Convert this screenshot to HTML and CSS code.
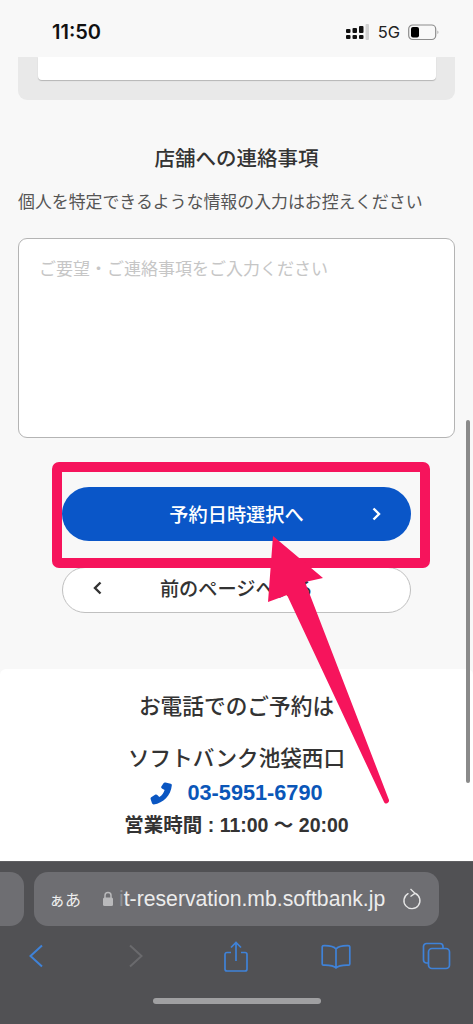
FILE: index.html
```html
<!DOCTYPE html>
<html lang="ja">
<head>
    <meta charset="UTF-8">
    <meta name="viewport" content="width=device-width, initial-scale=1.0">
    <title>予約</title>
    <link rel="stylesheet" href="styles.css">
</head>
<body>
    <div class="status-bar">
        <span class="clock">11:50</span>
        <div class="status-icons">
            <svg width="24" height="17" viewBox="0 0 24 17">
                <g fill="#111">
                    <rect x="0" y="5" width="4.500" height="4" rx="1"/>
                    <rect x="0" y="11" width="4.500" height="4" rx="1"/>
                    <rect x="6.500" y="4" width="4.500" height="5" rx="1"/>
                    <rect x="6.500" y="11" width="4.500" height="4" rx="1"/>
                    <rect x="13" y="2" width="4.500" height="7" rx="1"/>
                    <rect x="13" y="11" width="4.500" height="4" rx="1"/>
                </g>
                <rect x="19.500" y="0" width="3.500" height="16" rx="1" fill="#d2d2d2"/>
            </svg>
            <span class="network">5G</span>
            <svg width="32" height="17" viewBox="0 0 32 17">
                <rect x="0.700" y="1" width="27" height="14.500" rx="4" fill="none" stroke="#8c8c8c" stroke-width="1.200"/>
                <rect x="3" y="3" width="8" height="10.500" rx="2" fill="#000"/>
                <path d="M29.500 6.500c1.200.4 1.200 3 0 3.500z" fill="#999"/>
            </svg>
        </div>
    </div>

    <main class="content">
        <div class="prev-panel">
            <div class="prev-card"></div>
        </div>

        <h2 class="section-title">店舗への連絡事項</h2>
        <p class="section-note">個人を特定できるような情報の入力はお控えください</p>
        <div class="message-box">ご要望・ご連絡事項をご入力ください</div>

        <div class="buttons">
            <div class="btn btn-next">
                <span></span>
                <span>予約日時選択へ</span>
                <svg class="chevron chevron-next" width="12" height="16" viewBox="0 0 12 16">
                    <path d="M2.500 2.500L8 8l-5.500 5.500" fill="none" stroke="#fff" stroke-width="2.400"/>
                </svg>
            </div>
            <div class="btn btn-back">
                <svg class="chevron chevron-back" width="12" height="16" viewBox="0 0 12 16">
                    <path d="M9.500 2.500L4 8l5.500 5.500" fill="none" stroke="#333" stroke-width="2.400"/>
                </svg>
                <span>前のページへ戻る</span>
                <span></span>
            </div>
        </div>
    </main>

    <section class="phone-info">
        <h3 class="phone-title">お電話でのご予約は</h3>
        <div class="shop-name">ソフトバンク池袋西口</div>
        <div class="phone-row">
            <svg width="23" height="24" viewBox="0 0 23 24">
                <path d="M15.500 1.500l5.200 1.300c.8.2 1.200.8 1.100 1.600-.9 9.800-8.500 17.700-18 19-.8.1-1.500-.3-1.800-1.100L.6 17.900c-.2-.7 0-1.300.6-1.700l4.300-2.600c.6-.4 1.300-.2 1.800.3l2 2.200c2.700-1.700 4.500-4.300 5.300-7.200l-2.700-1.500c-.6-.3-.8-1-.7-1.600l2.300-3.500c.4-.6 1-.9 1.700-.8z" fill="#0a56c2"/>
            </svg>
            <span class="phone-number">03-5951-6790</span>
        </div>
        <div class="hours">営業時間 : 11:00 〜 20:00</div>
    </section>

    <div class="toolbar">
        <div class="url-row">
            <div class="prev-tab"></div>
            <div class="url-bar">
                <span class="text-size">ぁあ</span>
                <svg width="12" height="16" viewBox="0 0 12 16">
                    <path d="M3 7V4.500a3 3 0 0 1 6 0V7" fill="none" stroke="#b9b9bb" stroke-width="1.500"/>
                    <rect x="1" y="6.500" width="10" height="8.500" rx="1.500" fill="#b9b9bb"/>
                </svg>
                <span class="url-text"><span class="url-fade">i</span>t-reservation.mb.softbank.jp</span>
                <svg width="20" height="23" viewBox="0 0 20 23">
                    <path d="M13.500 5.500a8 8 0 1 1-7.500.2" fill="none" stroke="#e6e6e6" stroke-width="1.400" stroke-linecap="round"/>
                    <path d="M8.500 1l4.500 4.300-4.500 3.200" fill="none" stroke="#e6e6e6" stroke-width="1.400"/>
                </svg>
            </div>
        </div>
        <div class="nav-row">
            <svg width="16" height="24" viewBox="0 0 16 24">
                <path d="M14 1.500L2.500 12 14 22.500" fill="none" stroke="#3f82d8" stroke-width="2"/>
            </svg>
            <svg width="16" height="24" viewBox="0 0 16 24">
                <path d="M2 1.500L13.500 12 2 22.500" fill="none" stroke="#6a6a6d" stroke-width="2"/>
            </svg>
            <svg width="24" height="31" viewBox="0 0 24 31">
                <path d="M7 11.500H3a2 2 0 0 0-2 2V28a2 2 0 0 0 2 2h18a2 2 0 0 0 2-2V13.500a2 2 0 0 0-2-2h-4M12 20V2M7 6.500L12 1.500l5 5" fill="none" stroke="#3f82d8" stroke-width="1.700"/>
            </svg>
            <svg width="30" height="25" viewBox="0 0 30 25">
                <path d="M15 5c-2-2.500-6-3.500-12.500-3.300-.8 0-1.300.5-1.300 1.300v17c0 .7.500 1.200 1.300 1.200 6-.2 10 .3 12.500 2.800 2.500-2.500 6.500-3 12.500-2.800.8 0 1.300-.5 1.300-1.200V3c0-.8-.5-1.300-1.300-1.300C21 1.500 17 2.500 15 5zm0 0v18" fill="none" stroke="#3f82d8" stroke-width="1.700"/>
            </svg>
            <svg width="29" height="28" viewBox="0 0 29 28">
                <path d="M6 21H4.500A3 3 0 0 1 1.500 18V4.500a3 3 0 0 1 3-3H18a3 3 0 0 1 3 3V6" fill="none" stroke="#3f82d8" stroke-width="1.700"/>
                <rect x="6.500" y="6.500" width="21" height="20" rx="3.500" fill="none" stroke="#3f82d8" stroke-width="1.700"/>
            </svg>
        </div>
        <div class="home-indicator"></div>
    </div>

    <div class="scrollbar"></div>

    <!-- annotation drawn on top of the screenshot -->
    <svg class="annotation" width="473" height="1024" viewBox="0 0 473 1024">
        <rect x="57" y="467" width="368" height="96" rx="2" fill="none" stroke="#f6145c" stroke-width="10"/>
        <path d="M273 536L323 578 305 582 389 800c.6 3-3.500 5-5 2L287 595 268 602z" fill="#f6145c"/>
    </svg>
</body>
</html>
```

FILE: styles.css
```css
html, body {
    margin: 0;
    padding: 0;
}

body {
    position: relative;
    width: 473px;
    height: 1024px;
    overflow: hidden;
    display: flex;
    flex-direction: column;
    background-color: #f8f8f8;
    color: #333;
    font-family: "Liberation Sans", "Noto Sans CJK JP", sans-serif;
}

/* Status bar */
.status-bar {
    height: 57px;
    flex-shrink: 0;
    display: flex;
    align-items: center;
    justify-content: space-between;
    padding: 7px 33px 0 52px;
    box-sizing: border-box;
    background-color: #f8f8f8;
}

.clock {
    font-family: Inter, "Liberation Sans", sans-serif;
    font-size: 20px;
    font-weight: 600;
    color: #111;
}

.status-icons {
    display: flex;
    align-items: center;
    gap: 8px;
}

.network {
    font-family: Inter, "Liberation Sans", sans-serif;
    font-size: 16.500px;
    color: #222;
}

/* Main content */
.content {
    flex: 1;
    display: flex;
    flex-direction: column;
}

.prev-panel {
    height: 43px;
    margin: 0 18px;
    padding: 0 19px 0 20px;
    box-sizing: border-box;
    background-color: #e9e9e9;
    border-radius: 0 0 9px 9px;
}

.prev-card {
    height: 23px;
    background-color: #fff;
    border-radius: 0 0 4px 4px;
    box-shadow: 0 1px 1px #b5b5b5;
}

.section-title {
    margin: 44px 0 0;
    text-align: center;
    font-size: 20.500px;
    line-height: 30px;
    font-weight: 500;
}

.section-note {
    margin: 16px 18px 0;
    font-size: 16.900px;
    line-height: 26px;
    color: #555;
}

.message-box {
    height: 200px;
    margin: 22px 18px 0;
    padding: 18px 20px;
    box-sizing: border-box;
    background-color: #fff;
    border: 1px solid #b4b4b4;
    border-radius: 9px;
    font-size: 17px;
    line-height: 26px;
    color: #c6c6c6;
}

.buttons {
    display: flex;
    flex-direction: column;
    gap: 26px;
    margin: 49px 62px 0;
}

.btn {
    display: grid;
    grid-template-columns: 1fr auto 1fr;
    align-items: center;
    box-sizing: border-box;
    border-radius: 27px;
    font-size: 19.200px;
    font-weight: 500;
}

.btn-next {
    height: 54px;
    background-color: #0a56c8;
    color: #fff;
}

.btn-back {
    height: 46px;
    padding-bottom: 5px;
    background-color: #fff;
    border: 1px solid #c0c0c0;
    color: #333;
}

.chevron-next {
    justify-self: end;
    margin-right: 28px;
}

.chevron-back {
    justify-self: start;
    margin-left: 28px;
}

/* Phone block */
.phone-info {
    height: 192px;
    flex-shrink: 0;
    box-sizing: border-box;
    padding-top: 22px;
    background-color: #fff;
    border-radius: 6px 6px 0 0;
    text-align: center;
}

.phone-title {
    margin: 0;
    font-size: 21.700px;
    line-height: 32px;
    font-weight: 500;
}

.shop-name {
    margin-top: 20px;
    font-size: 21.600px;
    line-height: 32px;
    font-weight: 500;
}

.phone-row {
    display: flex;
    align-items: center;
    justify-content: center;
    gap: 14px;
    margin-top: 2px;
    height: 32px;
}

.phone-number {
    font-size: 21.700px;
    font-weight: 700;
    color: #0a56b8;
}

.hours {
    margin-top: 1px;
    font-size: 19.500px;
    line-height: 30px;
    font-weight: 700;
}

/* Safari toolbar */
.toolbar {
    height: 163px;
    flex-shrink: 0;
    box-sizing: border-box;
    padding-top: 10px;
    background-color: #515154;
    border-top: 1px solid #5f5f62;
}

.url-row {
    display: flex;
    gap: 10px;
    height: 54px;
    margin-right: 34px;
}

.prev-tab {
    width: 24px;
    background-color: #6e6e72;
    border-radius: 0 14px 14px 0;
}

.url-bar {
    flex: 1;
    display: flex;
    align-items: center;
    padding: 0 17px 0 15px;
    background-color: #6e6e72;
    border-radius: 14px;
}

.text-size {
    font-size: 16px;
    color: #eee;
    margin-right: 21px;
}

.url-text {
    flex: 1;
    margin-left: 5px;
    font-size: 21.200px;
    color: #ececec;
    white-space: nowrap;
    overflow: hidden;
}

.url-fade {
    color: #8f8f92;
}

.nav-row {
    display: grid;
    grid-template-columns: repeat(5, 100px);
    justify-items: center;
    align-items: center;
    height: 44px;
    margin: 8px 0 0 -14px;
}

.home-indicator {
    width: 168px;
    height: 6px;
    margin: 20px auto 0;
    background-color: #a0a0a2;
    border-radius: 3px;
}

/* Overlays */
.scrollbar {
    position: absolute;
    left: 466px;
    top: 420px;
    width: 4px;
    height: 363px;
    border-radius: 2px;
    background-color: #8a8a8a;
}

.annotation {
    position: absolute;
    top: 0;
    left: 0;
}
```
